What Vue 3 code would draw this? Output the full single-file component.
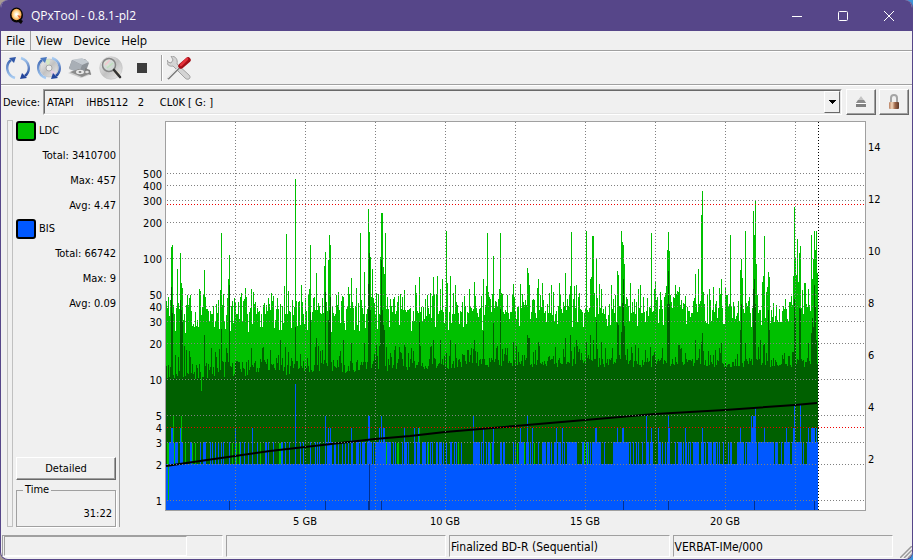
<script setup>
import { ref } from 'vue'

const menus = ['File', 'View', 'Device', 'Help']
const device = ref('ATAPI\u00a0\u00a0\u00a0\u00a0iHBS112\u00a0\u00a0\u00a02\u00a0\u00a0\u00a0\u00a0\u00a0CL0K\u00a0[\u00a0G:\u00a0]')
const stats = [
  { name: 'LDC', kind: 'ldc', rows: ['Total: 3410700', 'Max: 457', 'Avg: 4.47'] },
  { name: 'BIS', kind: 'bis', rows: ['Total: 66742', 'Max: 9', 'Avg: 0.09'] },
]

// Plot frame in chart units
const plot = { left: 166, top: 122, right: 865, bottom: 510, end: 818 }
const levels = [500, 400, 300, 200, 100, 50, 40, 30, 20, 10, 5, 4, 3, 2, 1]
const yOf = (v) => Math.round(501 - 121 * Math.log10(v))
const hLines = levels.filter((v) => v !== 4)
const vLines = [235, 305, 375, 445, 515, 585, 655, 725, 795]
const speeds = [14, 12, 10, 8, 6, 4, 2]
const sizes = [5, 10, 15, 20]

const ldcPeaks = '171,247 172,245 177,269 180,253 181,283 182,288 190,295 199,289 200,291 204,270 220,290 221,233 228,279 229,255 245,288 251,289 253,292 284,286 286,234 288,291 295,179 301,285 309,289 310,245 316,273 324,266 325,252 328,260 329,235 330,245 338,292 348,287 351,278 356,288 360,233 364,272 368,209 369,232 370,257 372,269 380,257 381,213 382,213 383,267 384,274 385,233 404,290 415,285 419,277 433,277 437,276 440,289 442,279 446,231 447,283 450,276 455,285 469,289 474,282 483,279 486,286 487,233 493,256 499,289 500,233 513,284 520,284 527,268 528,273 529,285 537,288 538,279 542,283 551,285 559,283 565,273 570,286 571,232 574,286 576,285 586,231 590,279 591,277 592,236 593,236 596,258 599,284 601,289 611,285 617,271 618,275 621,231 622,242 623,245 624,264 630,283 638,289 640,285 651,233 654,289 655,282 666,286 667,250 668,232 669,251 675,285 679,287 695,274 698,269 701,215 702,191 703,292 709,289 713,287 719,288 721,279 725,287 730,235 740,270 741,259 742,278 745,231 753,211 754,235 755,201 756,264 762,282 763,276 764,236 767,287 768,272 769,277 793,276 794,207 795,257 796,275 797,239 798,282 799,253 800,246 802,290 804,283 805,283 808,289 811,235 812,279 813,259 814,231 815,250 816,231 817,273'
const avgPeaks = '171,287 172,313 180,300 181,310 182,322 204,335 221,329 229,285 251,348 280,340 295,327 310,312 316,338 325,292 328,320 329,310 330,297 343,340 351,343 364,343 368,284 369,253 370,310 380,315 381,260 382,310 383,325 384,330 404,345 419,321 433,340 440,340 450,340 455,343 474,340 483,331 493,323 500,309 513,342 527,335 528,338 529,338 538,342 565,338 570,335 576,340 586,342 590,335 593,340 596,320 601,342 617,323 618,325 621,332 622,303 623,279 624,326 654,352 667,304 668,271 669,304 679,345 695,340 701,342 702,333 721,343 740,330 741,304 745,343 753,289 754,279 755,304 760,340 764,343 768,310 769,330 794,299 795,317 799,308 800,309 808,343 811,333 812,318 813,327 814,285 815,306 816,340'
const bisThree = '169-173 175-177 180-182 190-191 200 203-205 210 212 215 218 221 223 229 235 240 244 248 252 257 265-266 268 273 281-282 285 289 295 300 303 310 315 317 319 325 327-331 334-335 338 342 345 348 351-352 356-358 360 362-364 367-371 373 375-385 387-390 393 395 402 404-406 408 414-415 417-419 422-425 427 430 432 436-437 439-441 443 446 450-451 454 456 461 473-479 481 483 486 488-489 492-493 500-501 503-504 513 515 519-523 526-528 530 532 538 542-545 547-549 551 554-556 558-560 562 564 567-576 582-583 586 588 590 592-600 604 613-628 630 633 636 638 642 646-648 650-652 658-660 662 665 667-669 675 678-681 683 685-686 688 690 693-694 695-698 701-703 705 708-711 713-715 717 719 723 728 730-731 737-743 745 747-756 758-764 765-773 775-777 781 784-789 792-801 803 807-817'
const bisHigh = '295,384 171,428 172,428 180,428 235,428 252,428 328,428 330,428 351,428 379,428 383,428 384,428 404,428 414,428 418,428 325,416 368,416 369,416 381,416 473,416 483,428 493,428 520,428 527,416 532,428 556,428 562,428 595,428 596,428 617,428 622,428 623,428 646,416 651,428 658,428 668,416 669,428 685,428 702,428 740,428 751,416 753,416 754,416 755,407 752,428 764,428 786,428 793,428 794,405 800,405 808,428 811,428 812,428 813,428 814,428 816,428'
const greenLow = '167,443 168,443 174,443 176,443 185,443 192,443 195,443 232,443 236,443 239,443 260,443 279,443 280,443 386,443 397,443 398,443 173,416 181,416 419,428 428,443 458,443 490,443 517,443 524,443 534,443 584,443 587,443'
const deepBlue = [[229, 501], [325, 501], [368, 501], [369, 464], [381, 501], [623, 501], [668, 501], [754, 501], [814, 501]]

const pairs = (s) => s.split(' ').map((p) => p.split(',').map(Number))
const toMap = (s) => new Map(pairs(s))
const columnPath = (cols, base) => cols.map(([x, y]) => `M${x} ${base}V${y}h1V${base}z`).join('')

let seed = 90817
const rand = () => {
  seed = (seed * 1664525 + 1013904223) % 4294967296
  return seed / 4294967296
}

const ldcMap = toMap(ldcPeaks)
const avgMap = toMap(avgPeaks)
const ldcCols = []
const avgCols = []
for (let x = plot.left; x < plot.end; x++) {
  const t = (x - plot.left) / (plot.end - plot.left)
  const r = rand()
  const floor = r < 0.25 ? 314 + rand() * (20 - 8 * t) : 315 - Math.pow(rand(), 1.5) * 22 - t * 2
  const a = rand()
  const mean = a < 0.22 ? 345 + rand() * 12 : 358 + rand() * (22 - 13 * Math.min(1, t * 2))
  ldcCols.push([x, ldcMap.get(x) ?? Math.round(floor)])
  avgCols.push([x, avgMap.get(x) ?? Math.round(mean)])
}
avgCols[35][1] = 391
const ldcPath = columnPath(ldcCols, plot.bottom)
const avgPath = columnPath(avgCols, plot.bottom)

const bisCols = []
for (const part of bisThree.split(' ')) {
  const [a, b = a] = part.split('-').map(Number)
  for (let x = a; x <= b; x++) bisCols.push([x, 442])
}
const bisPath = columnPath(bisCols.concat(pairs(bisHigh)), 464)
const greenPath = columnPath(pairs(greenLow), 464)
const deepPath = columnPath(deepBlue, plot.bottom)
const speedLine = '166,466 200,461 235,456 270,451 305,447 340,443 375,439 410,436 445,432 515,426 585,420 655,414 725,410 795,405 817,403'
const statusCells = ['', 'Finalized BD-R (Sequential)', 'VERBAT-IMe/000']
</script>

<template>
  <div class="window">
    <header class="titlebar">
      <svg class="app-icon" viewBox="0 0 16 18" aria-hidden="true">
        <defs>
          <radialGradient id="disc"><stop offset="0" stop-color="#fff" /><stop offset=".5" stop-color="#ffe7b0" /><stop offset="1" stop-color="#f9a13c" /></radialGradient>
        </defs>
        <ellipse cx="7.500" cy="8" rx="6.500" ry="7.500" fill="#080604" />
        <path d="M9 11l5 3-2 3-4-3z" fill="#080604" />
        <ellipse cx="7.500" cy="7.500" rx="5" ry="5.800" fill="url(#disc)" />
        <path d="M8 8l4 1-1 3z" fill="#e2642a" />
        <circle cx="7.500" cy="7.500" r="1.300" fill="#fff" />
      </svg>
      <span class="title">QPxTool - 0.8.1-pl2</span>
      <button class="caption" aria-label="Minimize"><svg viewBox="0 0 12 12"><path d="M1 6.500h10" /></svg></button>
      <button class="caption" aria-label="Maximize"><svg viewBox="0 0 12 12"><rect x="1.500" y="1.500" width="9" height="9" rx="1" /></svg></button>
      <button class="caption" aria-label="Close"><svg viewBox="0 0 12 12"><path d="M1 1l10 10M11 1L1 11" /></svg></button>
    </header>

    <nav class="menubar">
      <button v-for="(m, i) in menus" :key="m" :class="['menu', { raised: i === 0 }]">{{ m }}</button>
    </nav>

    <div class="toolbar">
      <button class="tool" aria-label="Rescan bus">
        <svg viewBox="0 0 24 24">
          <defs>
            <linearGradient id="arc" x1="0" y1="0" x2="0" y2="1"><stop offset="0" stop-color="#3f68b4" /><stop offset="1" stop-color="#a9cdf2" /></linearGradient>
            <linearGradient id="arc2" x1="0" y1="1" x2="0" y2="0"><stop offset="0" stop-color="#24469c" /><stop offset="1" stop-color="#a9cdf2" /></linearGradient>
          </defs>
          <path d="M9 22C0 19-1 9 5 4" fill="none" stroke="url(#arc)" stroke-width="2.400" />
          <path d="M3 2l7-1-2 6-2-2z" fill="#3158a8" />
          <path d="M15 2C24 5 25 15 19 20" fill="none" stroke="url(#arc2)" stroke-width="2.400" />
          <path d="M21 22l-7 1 2-6 2 2z" fill="#24469c" />
        </svg>
      </button>
      <button class="tool" aria-label="Update media info">
        <svg viewBox="0 0 24 24">
          <defs><linearGradient id="silver" x1="0" y1="0" x2="1" y2="1"><stop offset="0" stop-color="#f5f5f5" /><stop offset=".5" stop-color="#c2c2c2" /><stop offset="1" stop-color="#eee" /></linearGradient></defs>
          <circle cx="12" cy="12" r="9" fill="url(#silver)" stroke="#bbb" stroke-width=".6" />
          <path d="M12 12L8 4l5-1z" fill="#d4e8c4" /><path d="M12 12l7 5-3 4z" fill="#e4cfe4" />
          <circle cx="12" cy="12" r="3" fill="#eee" stroke="#999" stroke-width=".8" />
          <path d="M9 22C0 19-1 9 5 4" fill="none" stroke="url(#arc)" stroke-width="2.400" />
          <path d="M3 2l7-1-2 6-2-2z" fill="#4a78c0" />
          <path d="M15 2C24 5 25 15 19 20" fill="none" stroke="url(#arc2)" stroke-width="2.400" />
          <path d="M21 22l-7 1 2-6 2 2z" fill="#24469c" />
        </svg>
      </button>
      <button class="tool" aria-label="Load or eject">
        <svg viewBox="0 0 24 24">
          <path d="M0 17l10-4 14 5-11 4z" fill="#cbcbcb" />
          <path d="M1 12l3-8 13-1 4 4-3 8-6 2z" fill="#8d9298" />
          <path d="M4 4l10-2 7 4-7 3z" fill="#c4cad0" />
          <path d="M4 4l10 5-3 8-10-4z" fill="#a9afb6" />
          <path d="M2 16l9-3 12 4-9 4z" fill="#8a8a8a" />
          <ellipse cx="12" cy="16" rx="4" ry="2.200" fill="#e8e8e8" /><ellipse cx="12" cy="16" rx="1.500" ry=".8" fill="#555" />
          <path d="M17 12l5 2 1 5-6-2z" fill="#808080" /><ellipse cx="19" cy="16" rx="1.800" ry="1.200" fill="#ddd" />
        </svg>
      </button>
      <button class="tool" aria-label="Start scan">
        <svg viewBox="0 0 24 24">
          <circle cx="12" cy="12" r="11.300" fill="url(#silver)" stroke="#bbb" stroke-width=".5" />
          <path d="M12 12L3 7l4-4zM12 12l9 5-3 3z" fill="#e9dfc7" />
          <circle cx="10" cy="9" r="6.500" fill="#d6dfdb" fill-opacity=".7" stroke="#858585" stroke-width="1.500" />
          <path d="M6 9l5-5" stroke="#f4c6ce" stroke-width="1.500" /><path d="M8 12l6-5" stroke="#bfe0bd" stroke-width="1.500" />
          <path d="M15 14l6 7" stroke="#333" stroke-width="2.600" stroke-linecap="round" />
        </svg>
      </button>
      <button class="tool" aria-label="Stop"><svg viewBox="0 0 24 24"><rect x="7" y="7" width="10" height="10" fill="#3d3d3d" /></svg></button>
      <span class="separator"></span>
      <button class="tool prefs" aria-label="Preferences">
        <svg viewBox="0 0 24 24">
          <path d="M4 0l2 4-2 3-3-1-1-2c-1 4 2 7 6 6l12 12c3 3 7 0 4-3L10 8c1-4-1-8-6-8z" fill="#d4d4d4" stroke="#929292" stroke-width=".8" />
          <path d="M1 23l12-12" stroke="#808080" stroke-width="2" /><path d="M1 22l11-11" stroke="#ddd" stroke-width="1" />
          <path d="M14 10l7-6" stroke="#a30f18" stroke-width="5.500" stroke-linecap="round" /><path d="M14 9l6-6" stroke="#e4323b" stroke-width="2.600" stroke-linecap="round" />
        </svg>
      </button>
    </div>

    <div class="device-row">
      <label for="device">Device:</label>
      <div class="combo">
        <select id="device"><option>{{ device }}</option></select>
        <span class="drop" aria-hidden="true"><svg viewBox="0 0 7 4"><path d="M0 0h7v1H6v1H5v1H4v1H3V3H2V2H1V1H0z" /></svg></span>
      </div>
      <button class="push square" aria-label="Eject">
        <svg viewBox="0 0 16 16"><path d="M8 2l5 7H3z" fill="#c4c4c4" /><path d="M5 6h6l2 3H3z" fill="#8c8c8c" /><rect x="3" y="10" width="10" height="3" fill="#808080" /><path d="M3 9.500h10" stroke="#fff" /></svg>
      </button>
      <button class="push square" aria-label="Lock">
        <svg viewBox="0 0 16 16">
          <defs><linearGradient id="brass"><stop offset="0" stop-color="#b98163" /><stop offset=".3" stop-color="#f3d8bd" /><stop offset=".6" stop-color="#a0684a" /><stop offset="1" stop-color="#5b3828" /></linearGradient></defs>
          <path d="M5 8V4c0-4 6-4 6 0v4" fill="none" stroke="#a4a4a4" stroke-width="2" /><rect x="3" y="8" width="10" height="7" rx="1" fill="url(#brass)" />
        </svg>
      </button>
    </div>

    <main class="content">
      <div class="handle"></div>
      <aside class="side">
        <section v-for="s in stats" :key="s.name" class="group">
          <div class="group-head"><span :class="['swatch', s.kind]"></span>{{ s.name }}</div>
          <p v-for="r in s.rows" :key="r">{{ r }}</p>
        </section>
        <div class="spacer"></div>
        <button class="push detailed">Detailed</button>
        <fieldset class="time"><legend>Time</legend>31:22</fieldset>
      </aside>
      <svg class="chart" viewBox="124 119 770 412" role="img" aria-label="LDC and BIS error chart">
        <g shape-rendering="crispEdges">
          <rect x="165" y="121" width="701" height="390" fill="#a0a0a0" />
          <rect x="166" y="122" width="699" height="388" fill="#fff" />
          <path :d="ldcPath" fill="#00c000" />
          <path :d="avgPath" fill="#006000" />
          <path :d="greenPath" fill="#00c000" />
          <path :d="bisPath" fill="#0058ff" />
          <rect x="166" y="464" width="652" height="46" fill="#0058ff" />
          <rect x="168" y="464" width="1" height="36" fill="#00c000" />
          <path :d="deepPath" fill="#003090" />
        </g>
        <polyline :points="speedLine" fill="none" stroke="#000" stroke-width="2" />
        <g class="grid" shape-rendering="crispEdges">
          <line v-for="v in hLines" :key="'h' + v" x1="167" x2="865" :y1="yOf(v) - 0.5" :y2="yOf(v) - 0.5" />
          <line v-for="x in vLines" :key="'v' + x" :x1="x + 0.5" :x2="x + 0.5" y1="122" y2="510" />
          <line class="limit" x1="167" x2="865" y1="204.5" y2="204.5" />
          <line class="limit" x1="167" x2="865" y1="427.5" y2="427.5" />
          <line class="end" x1="818.5" x2="818.5" y1="122" y2="510" />
        </g>
        <g class="labels">
          <text v-for="v in levels" :key="v" x="162" :y="yOf(v) + 4" text-anchor="end">{{ v }}</text>
          <text v-for="(v, i) in speeds" :key="'s' + v" x="868" :y="151 + i * 52">{{ v }}</text>
          <text v-for="(v, i) in sizes" :key="'g' + v" :x="305 + i * 140" y="525" text-anchor="middle">{{ v }} GB</text>
        </g>
      </svg>
    </main>

    <footer class="status">
      <div class="cell"><div class="progress"></div></div>
      <div v-for="(c, i) in statusCells" :key="i" class="cell">{{ c }}</div>
      <svg class="grip" viewBox="0 0 12 12" aria-hidden="true"><path d="M0 12L12 0M4 12l8-8M8 12l4-4" stroke="#999" stroke-width="1.500" /></svg>
    </footer>
  </div>
</template>

<style>
body {
  background: linear-gradient(90deg, #a99c94, #3c93d8);
}
</style>

<style scoped>
* {
  box-sizing: border-box;
}
.window {
  display: flex;
  flex-direction: column;
  height: 100vh;
  border: 1px solid #564689;
  border-top: 0;
  border-radius: 8px;
  overflow: hidden;
  background: #f0f0f0;
  color: #000;
  font: 11px/14px "DejaVu Sans Condensed", "DejaVu Sans", sans-serif;
}
button {
  font: inherit;
  color: inherit;
  padding: 0;
  margin: 0;
  border: 0;
  background: none;
}
svg {
  display: block;
}
.titlebar {
  display: flex;
  align-items: center;
  flex: none;
  height: 31px;
  padding-left: 8px;
  background: #564689;
  color: #fff;
}
.app-icon {
  width: 16px;
  height: 18px;
  margin-right: 6px;
}
.title {
  flex: 1;
  font: 12px/16px "Open Sans", sans-serif;
}
.caption {
  width: 46px;
  height: 31px;
  display: grid;
  place-items: center;
}
.caption svg {
  width: 12px;
  height: 12px;
  fill: none;
  stroke: #fff;
}
.menubar {
  display: flex;
  flex: none;
  height: 20px;
  border-bottom: 1px solid #a0a0a0;
  font: 12px/16px "Open Sans", sans-serif;
}
.menu {
  padding: 0 6px 0 5px;
  height: 19px;
}
.menu.raised {
  padding: 0 5px;
  border-right: 1px solid #a0a0a0;
}
.toolbar {
  display: flex;
  align-items: center;
  flex: none;
  height: 34px;
  padding-left: 1px;
  border-top: 1px solid #fff;
  border-bottom: 1px solid #a0a0a0;
}
.tool {
  width: 31px;
  height: 30px;
  display: grid;
  place-items: center;
}
.tool svg {
  width: 24px;
  height: 24px;
}
.separator {
  width: 2px;
  height: 26px;
  margin-left: 4px;
  border-left: 1px solid #a0a0a0;
  border-right: 1px solid #fff;
}
.device-row {
  display: flex;
  align-items: center;
  flex: none;
  gap: 3px;
  height: 32px;
  padding: 0 3px 0 2px;
  border-top: 1px solid #fff;
}
.device-row label {
  width: 37px;
  padding-top: 2px;
  white-space: nowrap;
}
.combo {
  position: relative;
  flex: 1;
  height: 26px;
  margin-right: 1px;
  border: 1px solid;
  border-color: #a0a0a0 #fff #fff #a0a0a0;
}
.combo select {
  appearance: none;
  width: 100%;
  height: 24px;
  padding: 2px 20px 0 2px;
  border: 1px solid;
  border-color: #696969 #e3e3e3 #e3e3e3 #696969;
  border-radius: 0;
  background: #f0f0f0;
  color: #000;
  font: inherit;
}
.drop {
  position: absolute;
  top: 1px;
  right: 1px;
  width: 16px;
  height: 22px;
  display: grid;
  place-items: center;
  pointer-events: none;
  background: #f0f0f0;
  border: 1px solid;
  border-color: #fff #696969 #696969 #fff;
}
.drop svg {
  width: 7px;
  height: 4px;
}
.push {
  background: #f0f0f0;
  border: 1px solid;
  border-color: #fff #696969 #696969 #fff;
  box-shadow: inset -1px -1px #a0a0a0;
}
.square {
  width: 30px;
  height: 26px;
  display: grid;
  place-items: center;
}
.square svg {
  width: 16px;
  height: 16px;
}
.content {
  display: flex;
  flex: 1;
  min-height: 0;
  padding: 2px 18px 4px 6px;
}
.handle {
  width: 6px;
  margin: 1px 3px 4px 0;
  border: 1px solid #c0c0c0;
}
.side {
  display: flex;
  flex-direction: column;
  width: 104px;
  margin: 1px 4px 4px 0;
  padding-right: 3px;
  border-right: 1px solid #a0a0a0;
  text-align: right;
}
.group {
  height: 98px;
}
.group-head {
  display: flex;
  align-items: center;
  gap: 3px;
  height: 22px;
}
.group p {
  margin: 0;
  height: 25px;
  line-height: 27px;
}
.swatch {
  width: 20px;
  height: 20px;
  border: 2px solid #000;
  border-radius: 3px;
}
.ldc {
  background: #00c000;
}
.bis {
  background: #0058ff;
}
.spacer {
  flex: 1;
}
.detailed {
  height: 23px;
  margin-bottom: 3px;
}
.time {
  margin: 0;
  height: 44px;
  padding: 10px 3px 0 6px;
  border: 1px solid #a0a0a0;
  box-shadow: 1px 1px #fff;
}
.time legend {
  margin-right: auto;
  padding: 0 2px;
  height: 14px;
}
.chart {
  flex: 1;
  min-width: 0;
  height: 100%;
}
.grid line {
  stroke: #808080;
  stroke-dasharray: 1 2;
}
.grid line.limit {
  stroke: #f00000;
}
.grid line.end {
  stroke: #000;
}
.labels {
  font-size: 11px;
}
.status {
  display: flex;
  flex: none;
  gap: 3px;
  height: 24px;
  padding: 0 0 1px 1px;
  font-size: 12px;
}
.cell {
  flex: 1;
  height: 22px;
  padding-left: 1px;
  line-height: 22px;
  white-space: nowrap;
  border: 1px solid;
  border-color: #a0a0a0 #fff #fff #a0a0a0;
}
.progress {
  width: 84%;
  height: 20px;
  border: 1px solid;
  border-color: #a0a0a0 #fff #fff #a0a0a0;
}
.grip {
  align-self: flex-end;
  width: 12px;
  height: 12px;
  margin-left: 4px;
}
</style>
